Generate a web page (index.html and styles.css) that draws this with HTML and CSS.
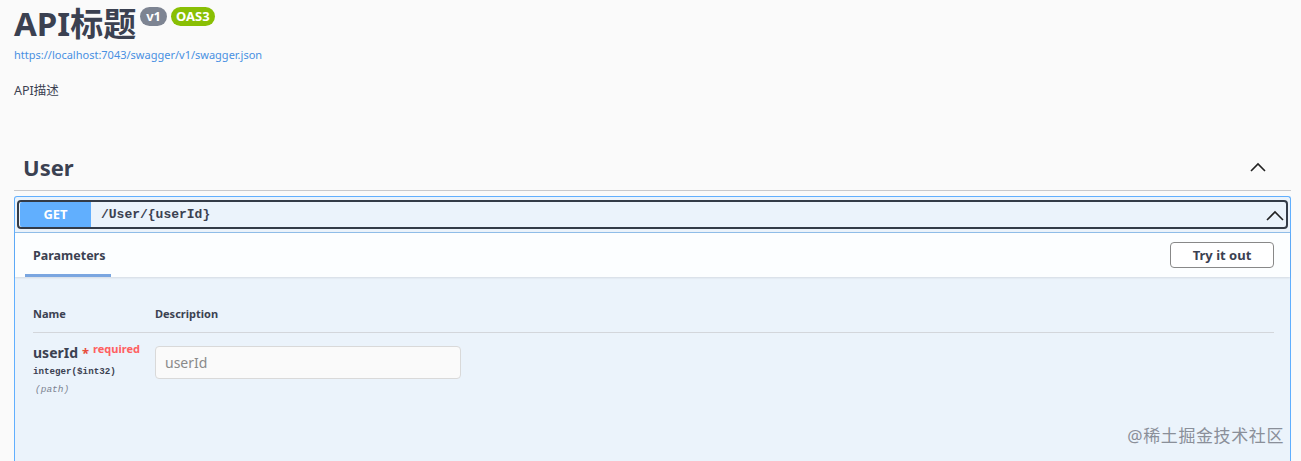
FILE: index.html
```html
<!DOCTYPE html>
<html lang="zh-CN">
<head>
    <meta charset="UTF-8">
    <title>Swagger UI</title>
    <link rel="stylesheet" href="styles.css">
</head>
<body>
    <div class="wrapper">
        <div class="info">
            <h2 class="title">API标题
                <span class="badges">
                    <small class="version">v1</small>
                    <small class="version oas">OAS3</small>
                </span>
            </h2>
            <a class="spec-link" href="#">https://localhost:7043/swagger/v1/swagger.json</a>
            <p class="description">API描述</p>
        </div>

        <div class="tag-section">
            <h3 class="tag">
                <span>User</span>
                <svg class="chevron" width="20" height="20" viewBox="0 0 20 20"><path d="M3 14 L10 7 L17 14" fill="none" stroke="#222" stroke-width="1.6"/></svg>
            </h3>

            <div class="opblock">
                <div class="summary">
                    <span class="method">GET</span>
                    <span class="path">/User/{userId}</span>
                    <svg class="chevron small" width="20" height="20" viewBox="0 0 20 20"><path d="M2 15 L10 7 L18 15" fill="none" stroke="#222" stroke-width="1.6"/></svg>
                </div>
                <div class="section-header">
                    <div class="tab">Parameters</div>
                    <button class="try-out">Try it out</button>
                </div>
                <div class="params">
                    <div class="param-head">
                        <div class="col-name">Name</div>
                        <div class="col-desc">Description</div>
                    </div>
                    <div class="param-row">
                        <div class="col-name">
                            <div class="param-name">userId<span class="star">*</span><sup class="required">required</sup></div>
                            <div class="param-type">integer($int32)</div>
                            <div class="param-in">(path)</div>
                        </div>
                        <div class="col-desc">
                            <input class="param-input" type="text" placeholder="userId">
                        </div>
                    </div>
                    <div class="watermark">@稀土掘金技术社区</div>
                </div>
            </div>
        </div>
    </div>
</body>
</html>
```

FILE: styles.css
```css
body {
    margin: 0;
    background: #fafafa;
    font-family: "Noto Sans", "Noto Sans CJK SC", sans-serif;
    color: #3b4151;
}
.wrapper {
    padding: 0 10px 0 14px;
}
.info {
    padding-top: 2px;
}
.title {
    margin: 0;
    font-size: 33px;
    line-height: 44px;
    font-weight: 700;
    display: flex;
    align-items: flex-start;
}
.badges {
    display: flex;
    gap: 4px;
    margin-left: 4px;
    margin-top: 5px;
}
.version {
    background: #7d8492;
    color: #fff;
    font-size: 13px;
    font-weight: 700;
    line-height: 19px;
    padding: 0 6px;
    border-radius: 10px;
}
.version.oas {
    background: #89bf04;
    padding: 0 5px;
}
.spec-link {
    display: block;
    font-size: 11px;
    color: #4990e2;
    text-decoration: none;
    line-height: 16px;
    margin-top: 1px;
}
.description {
    margin: 19px 0 0;
    font-size: 12.5px;
    line-height: 18px;
}
.tag-section {
    margin-top: 52px;
}
.tag {
    margin: 0;
    display: flex;
    align-items: center;
    justify-content: space-between;
    font-size: 22px;
    font-weight: 700;
    line-height: 30px;
    padding: 0 23px 8px 9px;
    border-bottom: 1px solid #c8c9cc;
}
.opblock {
    margin-top: 5px;
    border: 1px solid #61affe;
    border-bottom: 0;
    border-radius: 3px 3px 0 0;
    background: #ebf3fb;
    height: 265px;
    box-sizing: border-box;
    padding: 3px 0 0;
}
.summary {
    margin: 0 2px;
    border: 2px solid #333b47;
    border-radius: 4px;
    height: 29px;
    box-sizing: border-box;
    display: flex;
    align-items: center;
    padding: 1px;
}
.method {
    background: #61affe;
    color: #fff;
    font-size: 13px;
    font-weight: 700;
    width: 71px;
    height: 25px;
    line-height: 25px;
    text-align: center;
    border-radius: 2px 0 0 2px;
}
.path {
    font-family: "Liberation Mono", monospace;
    font-size: 13px;
    font-weight: 700;
    margin-left: 10px;
    flex: 1;
}
.section-header {
    margin-top: 3px;
    border-top: 1px solid #8fbde8;
    background: rgba(255, 255, 255, 0.85);
    box-shadow: 0 1px 2px rgba(0, 0, 0, 0.1);
    height: 44px;
    display: flex;
    align-items: stretch;
    justify-content: space-between;
    padding: 0 16px 0 10px;
}
.tab {
    font-size: 12.5px;
    font-weight: 700;
    padding: 0 8px;
    line-height: 46px;
    border-bottom: 3px solid #7aa6e0;
    width: 70px;
    height: 41px;
}
.try-out {
    align-self: center;
    font-family: "Noto Sans", sans-serif;
    font-size: 13px;
    font-weight: 700;
    color: #3b4151;
    background: #fff;
    border: 1px solid #888;
    border-radius: 4px;
    width: 104px;
    height: 26px;
}
.params {
    padding: 29px 16px 0 18px;
    position: relative;
    height: 181px;
    box-sizing: border-box;
}
.param-head {
    display: flex;
    font-size: 11px;
    font-weight: 700;
    padding-bottom: 11px;
    border-bottom: 1px solid #d3d6db;
}
.col-name {
    width: 122px;
}
.param-row {
    display: flex;
    padding-top: 6px;
}
.param-name {
    font-size: 14px;
    font-weight: 700;
    line-height: 20px;
}
.star {
    color: #e74c3c;
    margin-left: 4px;
    font-size: 13px;
}
.required {
    color: #ff6060;
    font-size: 11px;
    margin-left: 4px;
    vertical-align: 5px;
}
.param-type {
    font-family: "Liberation Mono", monospace;
    font-size: 9.2px;
    font-weight: 700;
    line-height: 18px;
}
.param-in {
    font-family: "Liberation Mono", monospace;
    font-size: 9.5px;
    font-style: italic;
    color: #7d8492;
    line-height: 18px;
    padding-left: 2px;
}
.param-input {
    width: 306px;
    height: 33px;
    box-sizing: border-box;
    border: 1px solid #d9d9d9;
    border-radius: 4px;
    background: #fafafa;
    font-family: "Noto Sans", sans-serif;
    font-size: 14px;
    padding: 0 9px;
    margin-top: 7px;
    color: #3b4151;
}
.param-input::placeholder {
    color: #8a8a8a;
}
.watermark {
    position: absolute;
    right: 6px;
    bottom: 11px;
    font-size: 17px;
    color: #8a8f99;
    letter-spacing: 0.6px;
}
```
